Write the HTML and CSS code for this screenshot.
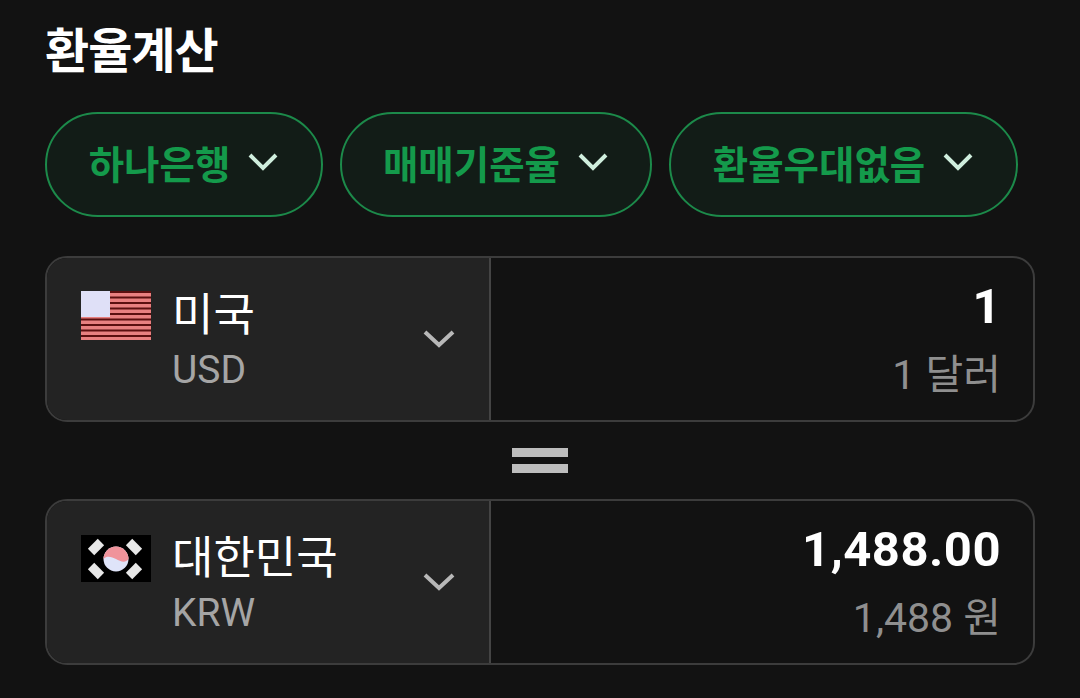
FILE: index.html
```html
<!DOCTYPE html>
<html lang="ko">
  <head>
    <meta charset="utf-8" />
    <title>환율계산</title>
    <link rel="stylesheet" href="styles.css">
  </head>
  <body>
    <h1 class="title">환율계산</h1>

    <div class="filters">
      <button class="pill pill-bank">하나은행
        <svg class="pill-arrow" viewBox="0 0 32 20"><path d="M3 3 L16 16 L29 3" /></svg>
      </button>
      <button class="pill pill-rate">매매기준율
        <svg class="pill-arrow" viewBox="0 0 32 20"><path d="M3 3 L16 16 L29 3" /></svg>
      </button>
      <button class="pill pill-discount">환율우대없음
        <svg class="pill-arrow" viewBox="0 0 32 20"><path d="M3 3 L16 16 L29 3" /></svg>
      </button>
    </div>

    <div class="calc">
      <div class="row">
        <div class="currency">
          <svg class="flag" viewBox="0 0 70 49">
            <rect width="70" height="49" fill="#e88080" />
            <rect y="0" width="70" height="2" fill="#5a0f0f" />
            <rect y="5.5" width="70" height="2" fill="#5a0f0f" />
            <rect y="11" width="70" height="2" fill="#5a0f0f" />
            <rect y="16.5" width="70" height="2" fill="#5a0f0f" />
            <rect y="22" width="70" height="2" fill="#5a0f0f" />
            <rect y="27.5" width="70" height="2" fill="#5a0f0f" />
            <rect y="33" width="70" height="2" fill="#5a0f0f" />
            <rect y="38.5" width="70" height="2" fill="#5a0f0f" />
            <rect y="44" width="70" height="2" fill="#5a0f0f" />
            <rect width="29" height="26" fill="#dfe0f7" />
          </svg>
          <div class="names">
            <div class="name">미국</div>
            <div class="code">USD</div>
          </div>
          <svg class="arrow" viewBox="0 0 32 20"><path d="M2 3 L16 16 L30 3" /></svg>
        </div>
        <div class="amount">
          <div class="value">1</div>
          <div class="unit">1 달러</div>
        </div>
      </div>

      <div class="equals"><span></span><span></span></div>

      <div class="row">
        <div class="currency">
          <svg class="flag flag-kr" viewBox="0 0 70 47">
            <rect width="70" height="47" fill="#000" />
            <circle cx="35" cy="24" r="12.5" fill="#dfe4f9" />
            <path d="M22.5 24 A12.5 12.5 0 0 1 47.5 24 C44 29 39 26 35 24 C31 22 26 20 22.5 24 Z" fill="#f0939b" />
            <g fill="#e8e8e8">
              <rect x="-7" y="-4.5" width="14" height="9" transform="translate(15 12) rotate(-45)" />
              <rect x="-7" y="-4.5" width="14" height="9" transform="translate(53 12) rotate(45)" />
              <rect x="-7" y="-4.5" width="14" height="9" transform="translate(15 36) rotate(45)" />
              <rect x="-7" y="-4.5" width="14" height="9" transform="translate(53 36) rotate(-45)" />
            </g>
          </svg>
          <div class="names">
            <div class="name">대한민국</div>
            <div class="code">KRW</div>
          </div>
          <svg class="arrow" viewBox="0 0 32 20"><path d="M2 3 L16 16 L30 3" /></svg>
        </div>
        <div class="amount">
          <div class="value">1,488.00</div>
          <div class="unit">1,488 원</div>
        </div>
      </div>
    </div>
  </body>
</html>
```

FILE: styles.css
```css
html, body {
  height: 100%;
}
body {
  margin: 0;
  padding: 22px 45px 0 45px;
  box-sizing: border-box;
  overflow: hidden;
  background: #121212;
  color: #fff;
  font-family: Roboto, "Noto Sans CJK KR", sans-serif;
}
.title {
  margin: 0;
  font-size: 48px;
  line-height: 60px;
  font-weight: 700;
  letter-spacing: -1px;
}
.filters {
  display: flex;
  gap: 17px;
  margin-top: 30px;
}
.pill {
  display: flex;
  align-items: center;
  justify-content: center;
  gap: 17px;
  height: 105px;
  box-sizing: border-box;
  padding: 0 0 5px;
  border: 2px solid #1c8a4a;
  border-radius: 53px;
  background: #121c17;
  color: #149a4b;
  font-family: inherit;
  font-size: 38.5px;
  font-weight: 700;
}
.pill-bank {
  width: 278px;
}
.pill-rate {
  width: 312px;
}
.pill-discount {
  width: 349px;
}
.pill-arrow {
  width: 32px;
  height: 20px;
}
.pill-arrow path {
  fill: none;
  stroke: #cfeedd;
  stroke-width: 4;
}
.calc {
  margin-top: 39px;
}
.row {
  display: flex;
  height: 166px;
  box-sizing: border-box;
  border: 2px solid #3c3c3c;
  border-radius: 22px;
  overflow: hidden;
}
.currency {
  display: flex;
  width: 444px;
  box-sizing: border-box;
  padding: 33px 34px 0 34px;
  background: #232323;
  border-right: 2px solid #444;
}
.flag {
  width: 70px;
  height: 49px;
  flex: none;
}
.flag-kr {
  height: 47px;
  margin-top: 1px;
}
.names {
  flex: 1;
  margin-left: 21px;
}
.name {
  margin-top: -2px;
  font-size: 45px;
  line-height: 54px;
  color: #fff;
}
.code {
  margin-top: 2px;
  font-size: 39px;
  line-height: 50px;
  color: #a5a5a5;
}
.arrow {
  width: 32px;
  height: 20px;
  margin-top: 38px;
  flex: none;
}
.arrow path {
  fill: none;
  stroke: #b8b8b8;
  stroke-width: 4;
}
.amount {
  flex: 1;
  padding: 19px 32px 0 0;
  text-align: right;
}
.value {
  font-size: 49px;
  line-height: 60px;
  font-weight: 700;
  letter-spacing: 0.5px;
}
.unit {
  margin-top: 11px;
  font-size: 41px;
  line-height: 54px;
  color: #8f8f8f;
}
.equals {
  display: flex;
  flex-direction: column;
  align-items: center;
  gap: 7px;
  height: 77px;
  box-sizing: border-box;
  padding-top: 26px;
}
.equals span {
  width: 56px;
  height: 9px;
  background: #bdbdbd;
}
```
